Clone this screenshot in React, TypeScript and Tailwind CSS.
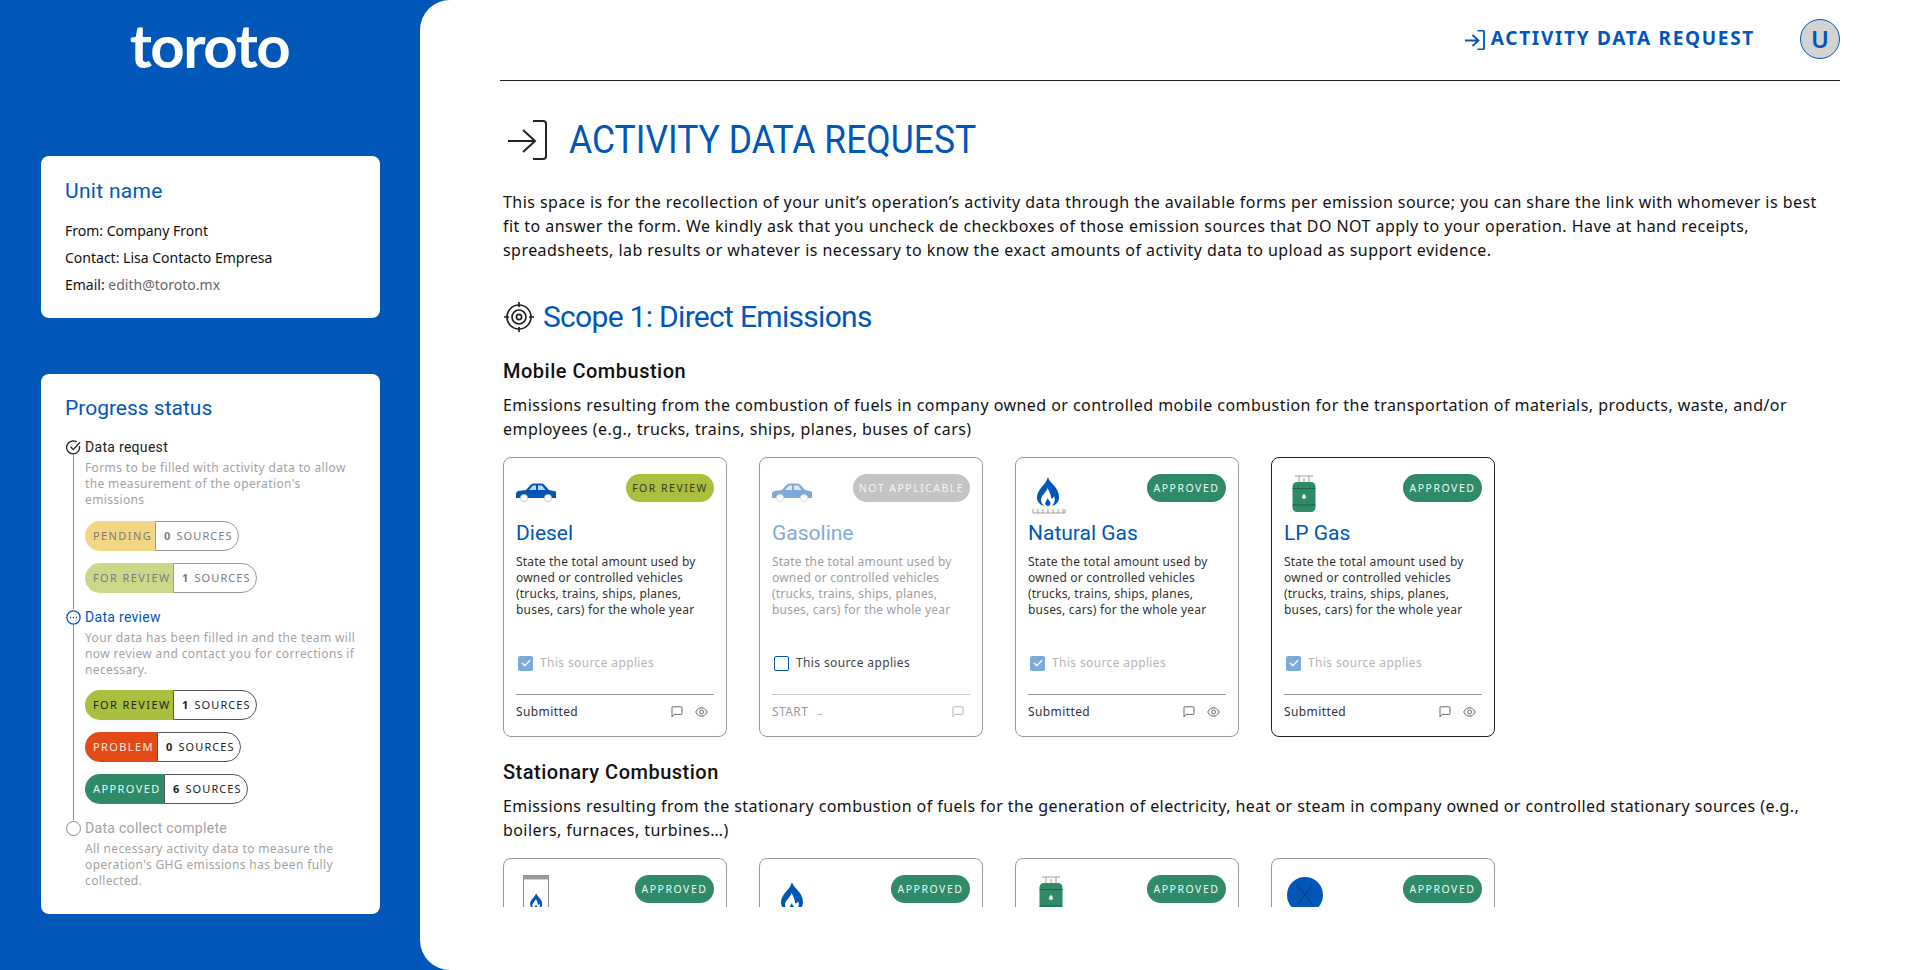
import React from "react";

const BODY = "font-['Noto_Sans',sans-serif]";
const HEAD = "font-['Roboto',sans-serif]";

const Car = ({ tone = "#0057b8" }: { tone?: string }) => (
  <svg width="40" height="20" viewBox="0 0 40 20" className="mt-[9px]">
    <path d="M0 10 L2 8 L10 7 L15 1.5 Q16 0.5 18 0.5 H25 Q27 0.5 28 1.5 L33 7 L40 8.5 V15 H0 Z" fill={tone} />
    <path d="M13 7 L17 2.5 H20 V7 Z M22 2.5 H26 L29.5 7 H22 Z" fill="#fff" opacity="0.75" />
    <circle cx="8" cy="15" r="3.6" fill="#fff" stroke="#b8b8b8" strokeWidth="0.8" />
    <circle cx="32" cy="15" r="3.6" fill="#fff" stroke="#b8b8b8" strokeWidth="0.8" />
  </svg>
);

const FlamePath = () => (
  <>
    <path d="M13 0 C14 6 24 10 24 20 C24 25 21 28 17 29 C20 26 20.5 22 19 19 C18.5 21 17 22 16 21 C16 17 14 14 12.5 11 C12 15 6 18 6 23 C6 25.5 7.5 27.5 9.5 29 C5 28 2 25 2 20 C2 12 11 8 13 0 Z" fill="#0057b8" />
    <path d="M12.5 21 C13 23 15.5 24 15.5 26.5 C15.5 28 14.5 29 13 29 C11.5 29 10.2 28 10.2 26.5 C10.2 24.5 12 23.5 12.5 21 Z" fill="#0057b8" />
  </>
);

const FlameBurner = () => (
  <svg width="34" height="37" viewBox="0 0 34 37" className="ml-[4px] mt-[3px]">
    <g transform="translate(3 0)">
      <FlamePath />
    </g>
    <path d="M1 32 V36 H33 V32 M6 32 V36 M11 32 V36 M16 32 V36 M21 32 V36 M26 32 V36 M31 32 V36" fill="none" stroke="#777" strokeWidth="0.7" />
  </svg>
);

const Flame = () => (
  <svg width="26" height="40" viewBox="0 0 26 32" className="ml-[7px] mt-[3px]">
    <FlamePath />
  </svg>
);

const Tank = ({ left }: { left: string }) => (
  <svg width="24" height="38" viewBox="0 0 24 38" className={`${left} mt-[1px]`}>
    <path d="M3 1 H21 M7 1 V7 M17 1 V7 M12 3 V7" stroke="#777" strokeWidth="0.7" fill="none" />
    <rect x="0.5" y="7" width="23" height="30" rx="4.5" fill="#2f8a68" />
    <path d="M0.5 13.5 H23.5 M0.5 30 H23.5" stroke="#1d5f47" strokeWidth="0.9" />
    <path d="M12 18.5 C12.5 20 14 20.5 14 22.3 C14 23.4 13 24 12 24 C11 24 10 23.4 10 22.3 C10 20.5 11.5 20 12 18.5 Z" fill="#fff" />
  </svg>
);

const Heater = () => (
  <svg width="28" height="44" viewBox="0 0 28 44" className="ml-[7px]">
    <rect x="0.5" y="0.5" width="25" height="43" fill="#fff" stroke="#8a8a8a" />
    <rect x="0.5" y="0.5" width="25" height="4" fill="#9a9a9a" />
    <g transform="translate(6 18) scale(0.55)">
      <FlamePath />
    </g>
  </svg>
);

const Meter = () => (
  <svg width="36" height="36" viewBox="0 0 36 36" className="ml-[3px] mt-[2px]">
    <circle cx="18" cy="18" r="18" fill="#0057b8" />
    <path d="M10 8 L26 28 M26 8 L10 28" stroke="#1a2b45" strokeWidth="0.7" />
  </svg>
);

const Chat = ({ c }: { c: string }) => (
  <svg width="12" height="12" viewBox="0 0 12 12" fill="none" stroke={c} strokeWidth="0.9">
    <path d="M1 1.4 Q1 0.8 1.6 0.8 H10.4 Q11 0.8 11 1.4 V7.8 Q11 8.4 10.4 8.4 H3.2 L1 10.8 Z" />
  </svg>
);

const Eye = ({ c }: { c: string }) => (
  <svg width="13" height="10" viewBox="0 0 13 10" fill="none" stroke={c} strokeWidth="0.9">
    <path d="M0.7 5 C2.5 1.8 4.5 0.8 6.5 0.8 C8.5 0.8 10.5 1.8 12.3 5 C10.5 8.2 8.5 9.2 6.5 9.2 C4.5 9.2 2.5 8.2 0.7 5 Z" />
    <circle cx="6.5" cy="5" r="2" />
  </svg>
);

const Enter = ({ size, c, w }: { size: number; c: string; w: number }) => (
  <svg width={size} height={size} viewBox="0 0 40 40" fill="none" stroke={c} strokeWidth={w} className="shrink-0">
    <path d="M0 21 H27 M15 10 L27 21 L15 32" />
    <path d="M25 1 H35 Q38 1 38 4 V36 Q38 39 35 39 H25" />
  </svg>
);

const Target = () => (
  <svg width="30" height="30" viewBox="0 0 30 30" fill="none" stroke="#222" strokeWidth="1.7" className="shrink-0">
    <circle cx="15" cy="15" r="12" />
    <circle cx="15" cy="15" r="7" />
    <circle cx="15" cy="15" r="2.6" />
    <path d="M15 0 V5 M15 25 V30 M0 15 H5 M25 15 H30" />
  </svg>
);

const statusStyle: Record<string, string> = {
  "FOR REVIEW": "bg-[#a9bf3d] text-[#3a3a1a] w-[88px]",
  "NOT APPLICABLE": "bg-[#c4c4c4] text-[#f4f4f4] w-[117px]",
  APPROVED: "bg-[#2f8a68] text-[#eafaf4] w-[79px]",
};

const desc = "State the total amount used by owned or controlled vehicles (trucks, trains, ships, planes, buses, cars) for the whole year";

const Check = () => (
  <span className="flex items-center justify-center w-[15px] h-[15px] rounded-[2px] bg-[#7fa9db] shrink-0">
    <svg width="10" height="8" viewBox="0 0 10 8" fill="none" stroke="#fff" strokeWidth="1.6">
      <path d="M1 4 L3.8 6.6 L9 1.2" />
    </svg>
  </span>
);

function Card({ icon, title, status, off, dark }: { icon: React.ReactNode; title?: string; status: string; off?: boolean; dark?: boolean }) {
  return (
    <div className={`w-[224px] h-[280px] shrink-0 rounded-[8px] border ${dark ? "border-[#222]" : "border-[#9a9a9a]"} pt-[16px] px-[12px] flex flex-col`}>
      <div className="h-[40px] flex justify-between items-start">
        <div className={off ? "opacity-50" : ""}>{icon}</div>
        <span className={`h-[28px] pt-[1px] rounded-full flex items-center justify-center text-[10.5px] tracking-[1.5px] ${statusStyle[status]}`}>{status}</span>
      </div>
      {title && (
        <>
          <div className={`mt-[4px] h-[30px] leading-[30px] text-[21px] ${HEAD} ${off ? "text-[#7fabdc]" : "text-[#0057b8]"}`}>{title}</div>
          <p className={`mt-[6px] h-[64px] text-[12px] leading-[16px] tracking-[0.2px] ${off ? "text-[#a0a0a0]" : "text-[#333]"}`}>{desc}</p>
          <div className="mt-[37px] h-[16px] flex items-center gap-[7px] pl-[2px] text-[12px] tracking-[0.37px]">
            {off ? <span className="w-[15px] h-[15px] rounded-[2px] border-[1.5px] border-[#0057b8] shrink-0" /> : <Check />}
            <span className={off ? "text-[#444]" : "text-[#b5b5b5]"}>This source applies</span>
          </div>
          <div className={`mt-[23px] h-px ${off ? "bg-[#c8c8c8]" : "bg-[#999]"}`} />
          <div className="mt-[9px] h-[16px] flex items-center justify-between text-[12px] tracking-[0.4px]">
            <span className={off ? "text-[#999]" : "text-[#333]"}>{off ? <>START <span className="ml-[3px] text-[9px]">→</span></> : "Submitted"}</span>
            <span className="flex items-center gap-[12px] pr-[6px]">
              <Chat c={off ? "#aaa" : "#555"} />
              {!off && <Eye c="#555" />}
            </span>
          </div>
        </>
      )}
    </div>
  );
}

function Pill({ label, left, count, right, tone, faded }: { label: string; left: number; count: number; right: number; tone: string; faded?: boolean }) {
  return (
    <div className={`flex h-[30px] text-[11px] ${faded ? "opacity-60" : ""}`}>
      <span style={{ width: left }} className={`rounded-l-full flex items-center pl-[8px] tracking-[1.4px] ${tone}`}>{label}</span>
      <span style={{ width: right }} className="rounded-r-full border border-[#555] flex items-center pl-[8px] tracking-[1.1px] text-[#222]">
        <b className="mr-[5px]">{count}</b>SOURCES
      </span>
    </div>
  );
}

function Step({ icon, title, titleClass, text, children, line, top = 12 }: { icon: React.ReactNode; title: string; titleClass: string; text: string; children?: React.ReactNode; line?: boolean; top?: number }) {
  return (
    <div className="flex">
      <div className="w-[19px] shrink-0 flex flex-col pt-[1px]">
        {icon}
        {line && <div className="w-px flex-1 bg-[#8a8a8a] ml-[7px]" />}
      </div>
      <div className="pb-[16px] flex-1">
        <div className={`h-[16px] leading-[16px] text-[14px] tracking-[0.3px] ${HEAD} ${titleClass}`}>{title}</div>
        <p className="mt-[5px] text-[12px] leading-[16px] tracking-[0.37px] text-[#a3a3a3]">{text}</p>
        {children && <div style={{ marginTop: top }} className="flex flex-col gap-[12px]">{children}</div>}
      </div>
    </div>
  );
}

export default function App() {
  return (
    <div className={`flex h-[970px] w-full overflow-hidden bg-[#0057b8] ${BODY}`}>
      <aside className="w-[420px] shrink-0 pl-[41px] pr-[40px]">
        <div className="h-[156px] flex justify-center pt-[9px]">
          <div className="h-[72px] leading-[72px] text-[60px] font-bold text-white tracking-[-1.5px] font-['Lato',sans-serif] ml-[-2px]">toroto</div>
        </div>
        <section className="h-[162px] rounded-[8px] bg-white px-[24px] pt-[20px]">
          <h2 className={`h-[30px] leading-[30px] text-[21px] tracking-[0.3px] text-[#0057b8] ${HEAD}`}>Unit name</h2>
          <div className="mt-[11px] text-[14px] leading-[27px] text-[#111]">
            <p>From: Company Front</p>
            <p>Contact: Lisa Contacto Empresa</p>
            <p>Email: <span className="text-[#666]">edith@toroto.mx</span></p>
          </div>
        </section>
        <section className="mt-[56px] h-[540px] rounded-[8px] bg-white pl-[24px] pr-[18px] pt-[19px]">
          <h2 className={`h-[30px] leading-[30px] text-[21px] text-[#0057b8] ${HEAD}`}>Progress status</h2>
          <div className="mt-[16px] ml-[1px]">
            <Step
              line
              top={13}
              title="Data request"
              titleClass="text-[#222]"
              text="Forms to be filled with activity data to allow the measurement of the operation's emissions"
              icon={
                <svg width="15" height="15" viewBox="0 0 15 15" fill="none" stroke="#222" strokeWidth="1.3" className="shrink-0">
                  <path d="M13.4 5.8 A6.5 6.5 0 1 1 10.6 1.9" />
                  <path d="M4.5 6.8 L7.3 9.6 L14 2.2" />
                </svg>
              }
            >
              <Pill faded label="PENDING" left={70} count={0} right={84} tone="bg-[#e9bd33] text-[#222]" />
              <Pill faded label="FOR REVIEW" left={88} count={1} right={84} tone="bg-[#a9bf3d] text-[#222]" />
            </Step>
            <Step
              line
              title="Data review"
              titleClass="text-[#0057b8]"
              text="Your data has been filled in and the team will now review and contact you for corrections if necessary."
              icon={
                <svg width="15" height="15" viewBox="0 0 15 15" className="shrink-0">
                  <circle cx="7.5" cy="7.5" r="6.6" fill="none" stroke="#0057b8" strokeWidth="1.3" />
                  <path d="M4 7.5 H5.2 M6.9 7.5 H8.1 M9.8 7.5 H11" stroke="#0057b8" strokeWidth="1.6" />
                </svg>
              }
            >
              <Pill label="FOR REVIEW" left={88} count={1} right={84} tone="bg-[#a9bf3d] text-[#222]" />
              <Pill label="PROBLEM" left={72} count={0} right={84} tone="bg-[#e34a18] text-[#fde9e0]" />
              <Pill label="APPROVED" left={79} count={6} right={84} tone="bg-[#2f8a68] text-[#e6f7f0]" />
            </Step>
            <Step
              title="Data collect complete"
              titleClass="text-[#a3a3a3]"
              text="All necessary activity data to measure the operation's GHG emissions has been fully collected."
              icon={<span className="block w-[15px] h-[15px] rounded-full border-[1.3px] border-[#8a8a8a] shrink-0" />}
            />
          </div>
        </section>
      </aside>
      <main className="flex-1 bg-white rounded-l-[30px] px-[80px] h-[970px]">
        <header className="h-[81px] border-b border-[#222] flex items-center justify-end">
          <Enter size={20} c="#0057b8" w={3.6} />
          <span className="ml-[6px] mb-[3px] text-[19px] font-bold tracking-[1.7px] text-[#0057b8]">ACTIVITY DATA REQUEST</span>
          <span className="ml-[45px] mb-[3px] w-[40px] h-[40px] rounded-full bg-[#d2d2d2] border border-[#0057b8] flex items-center justify-center text-[24px] font-semibold text-[#0057b8]">U</span>
        </header>
        <div className="h-[826px] overflow-hidden pl-[3px]">
          <div className="h-[39px]" />
          <div className="flex items-center gap-[21px] pl-[5px] h-[40px]">
            <Enter size={40} c="#222" w={2} />
            <h1 className={`text-[39px] leading-[40px] text-[#0057b8] scale-x-[0.91] origin-left ${HEAD}`}>ACTIVITY DATA REQUEST</h1>
          </div>
          <p className="mt-[30px] pr-[12px] text-[16px] leading-[24px] tracking-[0.45px] text-[#111]">
            This space is for the recollection of your unit’s operation’s activity data through the available forms per emission source; you can share the link with whomever is best fit to answer the form. We kindly ask that you uncheck de checkboxes of those emission sources that DO NOT apply to your operation. Have at hand receipts, spreadsheets, lab results or whatever is necessary to know the exact amounts of activity data to upload as support evidence.
          </p>
          <div className="mt-[37px] flex items-center gap-[9px] pl-[1px] h-[36px]">
            <Target />
            <h2 className={`text-[30px] leading-[36px] tracking-[-0.7px] text-[#0057b8] ${HEAD}`}>Scope 1: Direct Emissions</h2>
          </div>
          <h3 className={`mt-[22px] h-[28px] leading-[28px] text-[20px] font-medium tracking-[0.5px] text-[#111] ${HEAD}`}>Mobile Combustion</h3>
          <p className="mt-[8px] text-[16px] leading-[24px] tracking-[0.45px] text-[#111]">Emissions resulting from the combustion of fuels in company owned or controlled mobile combustion for the transportation of materials, products, waste, and/or employees (e.g., trucks, trains, ships, planes, buses of cars)</p>
          <div className="mt-[16px] flex gap-[32px]">
            <Card icon={<Car />} title="Diesel" status="FOR REVIEW" />
            <Card icon={<Car />} title="Gasoline" status="NOT APPLICABLE" off />
            <Card icon={<FlameBurner />} title="Natural Gas" status="APPROVED" />
            <Card icon={<Tank left="ml-[8px]" />} title="LP Gas" status="APPROVED" dark />
          </div>
          <h3 className={`mt-[21px] h-[28px] leading-[28px] text-[20px] font-medium tracking-[0.5px] text-[#111] ${HEAD}`}>Stationary Combustion</h3>
          <p className="mt-[8px] text-[16px] leading-[24px] tracking-[0.42px] text-[#111]">Emissions resulting from the stationary combustion of fuels for the generation of electricity, heat or steam in company owned or controlled stationary sources (e.g., boilers, furnaces, turbines…)</p>
          <div className="mt-[16px] flex gap-[32px]">
            <Card icon={<Heater />} status="APPROVED" />
            <Card icon={<Flame />} status="APPROVED" />
            <Card icon={<Tank left="ml-[11px]" />} status="APPROVED" />
            <Card icon={<Meter />} status="APPROVED" />
          </div>
        </div>
      </main>
    </div>
  );
}
